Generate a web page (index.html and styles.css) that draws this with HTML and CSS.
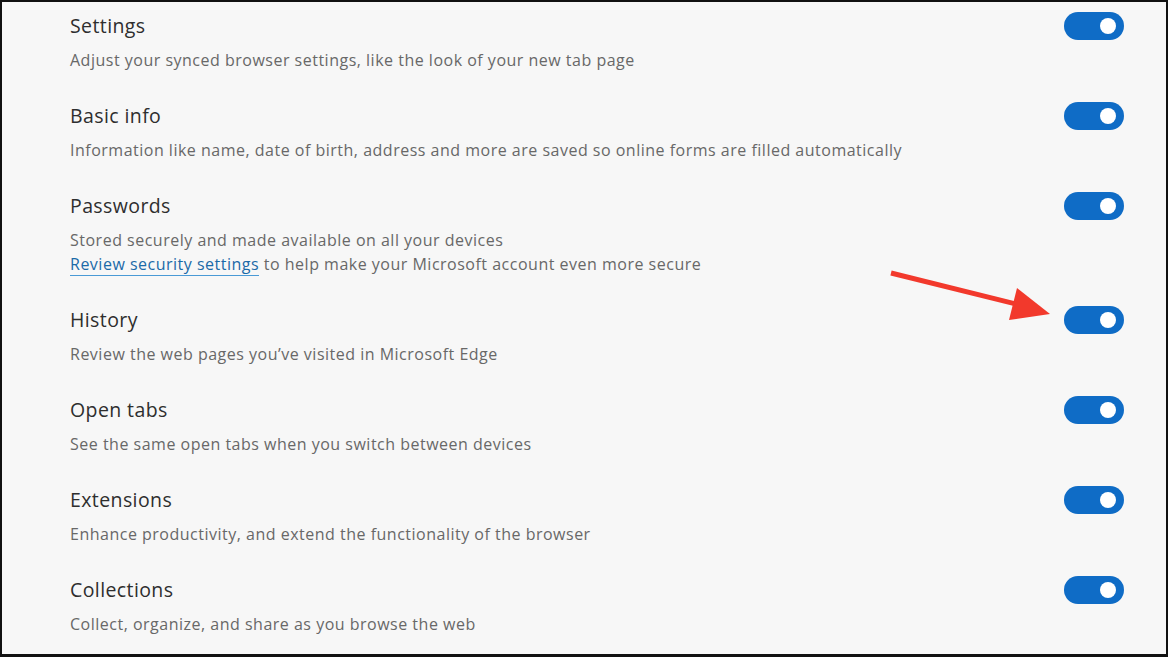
FILE: index.html
```html
<!DOCTYPE html>
<html lang="en">
<head>
    <meta charset="UTF-8">
    <meta name="viewport" content="width=device-width, initial-scale=1.0">
    <title>Sync settings</title>
    <link rel="stylesheet" href="styles.css">
</head>
<body>
    <div class="frame">
        <div class="sync-list">
            <div class="sync-item">
                <div class="item-title">Settings</div>
                <div class="toggle"><span class="knob"></span></div>
                <div class="item-desc">Adjust your synced browser settings, like the look of your new tab page</div>
            </div>
            <div class="sync-item">
                <div class="item-title">Basic info</div>
                <div class="toggle"><span class="knob"></span></div>
                <div class="item-desc">Information like name, date of birth, address and more are saved so online forms are filled automatically</div>
            </div>
            <div class="sync-item">
                <div class="item-title">Passwords</div>
                <div class="toggle"><span class="knob"></span></div>
                <div class="item-desc">
                    Stored securely and made available on all your devices<br>
                    <a href="#" class="desc-link">Review security settings</a> to help make your Microsoft account even more secure
                </div>
            </div>
            <div class="sync-item">
                <div class="item-title">History</div>
                <div class="toggle"><span class="knob"></span></div>
                <div class="item-desc">Review the web pages you’ve visited in Microsoft Edge</div>
            </div>
            <div class="sync-item">
                <div class="item-title">Open tabs</div>
                <div class="toggle"><span class="knob"></span></div>
                <div class="item-desc">See the same open tabs when you switch between devices</div>
            </div>
            <div class="sync-item">
                <div class="item-title">Extensions</div>
                <div class="toggle"><span class="knob"></span></div>
                <div class="item-desc">Enhance productivity, and extend the functionality of the browser</div>
            </div>
            <div class="sync-item">
                <div class="item-title">Collections</div>
                <div class="toggle"><span class="knob"></span></div>
                <div class="item-desc">Collect, organize, and share as you browse the web</div>
            </div>
        </div>

        <!-- red annotation arrow pointing at the History toggle -->
        <svg class="arrow" width="170" height="60" viewBox="0 0 170 60">
            <line x1="2" y1="5" x2="135" y2="38" stroke="#f2392c" stroke-width="5"/>
            <polygon points="128,20 161,46 120,52" fill="#f2392c"/>
        </svg>
    </div>
</body>
</html>
```

FILE: styles.css
```css
html, body {
    margin: 0;
    padding: 0;
}
body {
    font-family: "Open Sans", "Noto Sans", Arial, sans-serif;
    background-color: #000;
}
.frame {
    position: relative;
    box-sizing: border-box;
    width: 1168px;
    height: 657px;
    border: 2px solid #111;
    border-bottom-width: 3px;
    background-color: #f7f7f7;
    overflow: hidden;
}
.sync-list {
    display: flex;
    flex-direction: column;
    padding: 12px 42px 0 68px;
}
.sync-item {
    display: grid;
    grid-template-columns: 1fr auto;
    row-gap: 10px;
    padding-bottom: 32px;
}
.item-title {
    font-size: 19.5px;
    line-height: 24px;
    letter-spacing: 0.4px;
    font-weight: 500;
    color: #2e2e2e;
}
.item-desc {
    grid-column: 1 / 2;
    font-size: 16px;
    line-height: 24px;
    letter-spacing: 0.5px;
    color: #686868;
}
.desc-link {
    color: #1b6aa8;
    text-decoration: none;
    border-bottom: 1px solid #4a9ad6;
}
.toggle {
    position: relative;
    box-sizing: border-box;
    width: 60px;
    height: 28px;
    margin: -2px 0;
    border-radius: 14px;
    background-color: #0f6cc6;
}
.knob {
    position: absolute;
    top: 6px;
    right: 8px;
    width: 16px;
    height: 16px;
    border-radius: 50%;
    background-color: #fff;
}
.arrow {
    position: absolute;
    left: 887px;
    top: 266px;
}
```
